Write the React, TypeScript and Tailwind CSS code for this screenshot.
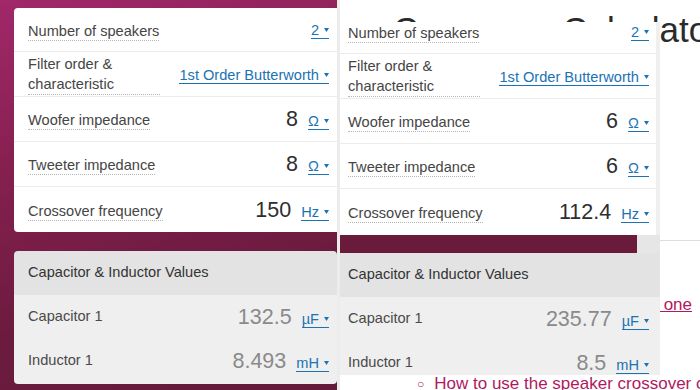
const BLUE = "text-[#1a73b4] border-[#1a73b4]"

type Field = { label: string; value?: string; unit: string; wide?: boolean }

const LEFT: Field[] = [
  { label: "Number of speakers", unit: "2" },
  { label: "Filter order & characteristic", unit: "1st Order Butterworth", wide: true },
  { label: "Woofer impedance", value: "8", unit: "Ω" },
  { label: "Tweeter impedance", value: "8", unit: "Ω" },
  { label: "Crossover frequency", value: "150", unit: "Hz" },
]

const RIGHT: Field[] = [
  { label: "Number of speakers", unit: "2" },
  { label: "Filter order & characteristic", unit: "1st Order Butterworth", wide: true },
  { label: "Woofer impedance", value: "6", unit: "Ω" },
  { label: "Tweeter impedance", value: "6", unit: "Ω" },
  { label: "Crossover frequency", value: "112.4", unit: "Hz" },
]

function Caret() {
  return (
    <svg width="5" height="4" viewBox="0 0 5 4" className="ml-[5px] shrink-0">
      <path d="M0 0h5L2.5 4z" fill="currentColor" />
    </svg>
  )
}

function Unit({ text }: { text: string }) {
  return (
    <span className={`inline-flex items-center border-b text-[14.6px] leading-[16px] whitespace-nowrap ${BLUE}`}>
      {text}
      <Caret />
    </span>
  )
}

function InputRow({ f, first, pl, pr }: { f: Field; first?: boolean; pl: string; pr: string }) {
  return (
    <div
      className={`flex items-center justify-between border-b border-[#ececec] last:border-b-0 ${pl} ${pr} ${
        first ? "h-[44px]" : "h-[45px]"
      }`}
    >
      <span
        className={`border-b border-dotted border-[#b5b5b5] text-[14.6px] text-[#454545] ${
          f.wide ? "w-[132px] leading-[20px]" : "leading-[18px] mt-[3px] whitespace-nowrap"
        }`}
      >
        {f.label}
      </span>
      <div className="flex items-baseline gap-[10px] mt-[2px]">
        {f.value && <span className="text-[21.5px] leading-none text-[#2e2e2e]">{f.value}</span>}
        <Unit text={f.unit} />
      </div>
    </div>
  )
}

function Results({ cap, ind, pl, pr, bodyH, rounded }: { cap: string; ind: string; pl: string; pr: string; bodyH: string; rounded?: boolean }) {
  return (
    <div className={`overflow-hidden ${rounded ? "rounded-[4px]" : ""}`}>
      <div className={`h-[44px] flex items-center bg-[#e3e3e3] ${pl} text-[14.6px] text-[#333]`}>
        Capacitor &amp; Inductor Values
      </div>
      <div className={`bg-[#efefef] overflow-hidden ${bodyH}`}>
        {[
          ["Capacitor 1", cap, "µF"],
          ["Inductor 1", ind, "mH"],
        ].map(([l, v, u]) => (
          <div key={l} className={`h-[44px] flex items-center justify-between ${pl} ${pr}`}>
            <span className="text-[14.6px] text-[#4a4a4a]">{l}</span>
            <div className="flex items-baseline gap-[10px] mt-[2px]">
              <span className="text-[21.5px] leading-none text-[#8a8a8a]">{v}</span>
              <Unit text={u} />
            </div>
          </div>
        ))}
      </div>
    </div>
  )
}

export default function App() {
  return (
    <div className="w-[700px] h-[390px] flex overflow-hidden font-['Liberation_Sans',Arial,sans-serif]">
      {/* left: widget on magenta */}
      <div className="w-[337px] shrink-0 pl-[14px] pt-[8px] bg-[linear-gradient(165deg,#a1286a_0%,#86204f_35%,#6c1b3f_70%,#641a3a_100%)]">
        <div className="bg-white rounded-l-[4px]">
          {LEFT.map((f, i) => (
            <InputRow key={f.label} f={f} first={i === 0} pl="pl-[14px]" pr="pr-[8px]" />
          ))}
        </div>
        <div className="mt-[19px]">
          <Results cap="132.5" ind="8.493" pl="pl-[14px]" pr="pr-[8px]" bodyH="h-[89px]" rounded />
        </div>
      </div>

      {/* right: page with pasted widget */}
      <div className="relative flex-1 min-w-0 overflow-hidden bg-white border-l-[3px] border-[#ececec]">
        <h1 className="mt-[12px] ml-[53px] text-[35px] leading-none text-[#2b2b2b] whitespace-nowrap">
          Crossover Calculator
        </h1>
        <hr className="mt-[193px] border-t border-[#dddddd]" />
        <div className="mt-[52px] flex justify-end pr-[8px] text-[17px] leading-[24px] whitespace-nowrap">
          <a className="text-[#b0195e] underline">in one</a>
        </div>
        <ul className="mt-[55px] ml-[77px] text-[17px] leading-[24px] text-[#b0195e] whitespace-nowrap">
          <li className="flex items-center gap-[10px]">
            <span className="text-[12px]">○</span>
            How to use the speaker crossover calculator
          </li>
        </ul>

        <div className="absolute top-[22px] left-0 w-[320px] z-10">
          <div className="overflow-hidden h-[213px] flex bg-white">
            <div className="flex-1 -mt-[12px]">
              {RIGHT.map((f, i) => (
                <InputRow key={f.label} f={f} first={i === 0} pl="pl-[8px]" pr="pr-[7px]" />
              ))}
            </div>
            <div className="w-[4px] bg-[#efefef]" />
          </div>
          <div className="h-[18px] flex">
            <div className="flex-1 bg-[#6a1b3c]" />
            <div className="w-[23px] bg-[#e6e6e6]" />
          </div>
          <Results cap="235.77" ind="8.5" pl="pl-[8px]" pr="pr-[11px]" bodyH="h-[78px]" />
        </div>
      </div>
    </div>
  )
}
